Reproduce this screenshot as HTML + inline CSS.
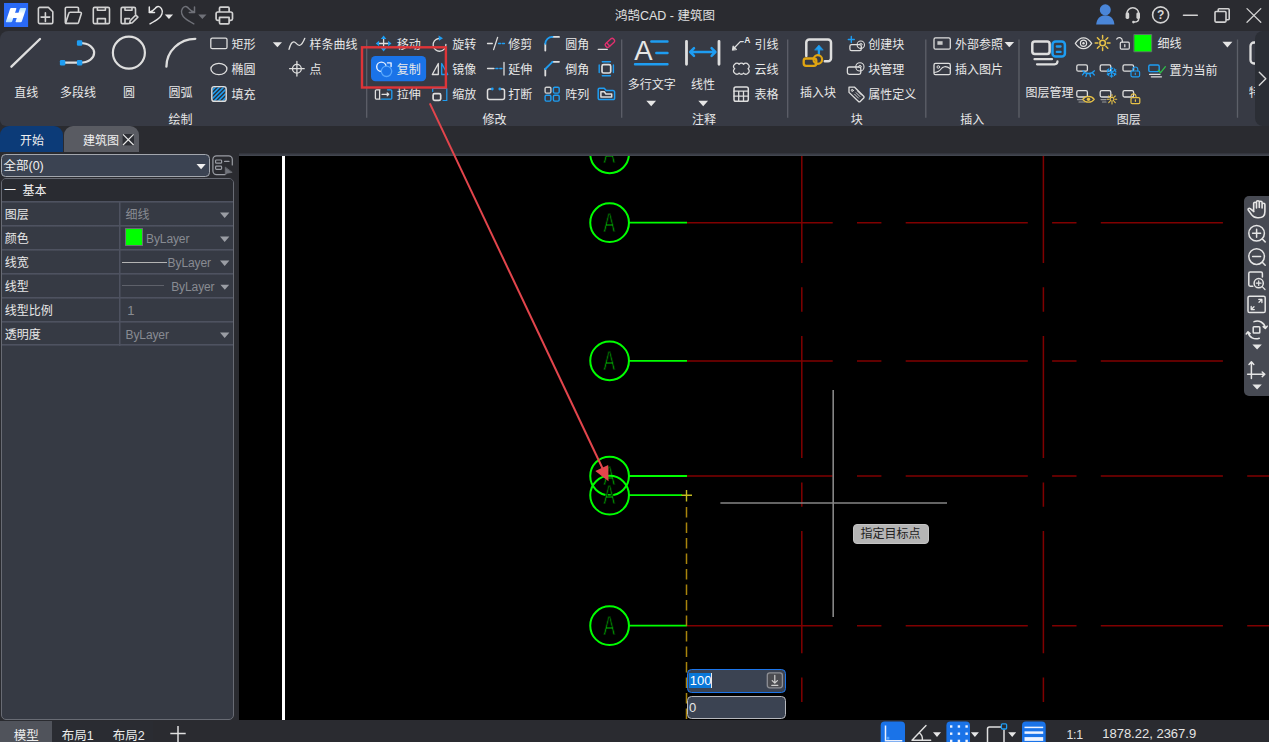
<!DOCTYPE html>
<html lang="zh-CN">
<head>
<meta charset="utf-8">
<title>鸿鹄CAD - 建筑图</title>
<style>
*{box-sizing:border-box;margin:0;padding:0}
html,body{width:1269px;height:742px;overflow:hidden;background:#2a2b30}
body{position:relative;font-family:"Liberation Sans","Noto Sans CJK SC",sans-serif;font-size:12px;color:#e6e6e6}
.abs{position:absolute}
.t{position:absolute;white-space:nowrap;line-height:16px;font-size:12px;color:#e8e8e8}
#titlebar{left:0;top:0;width:1269px;height:31px;background:#2a2b30}
#ribbon{left:0;top:30.500px;width:1262px;height:95.300px;background:#373a44;border-radius:8px 0 0 6px}
#ribbonR{left:1247px;top:37px;width:22px;height:83px;background:#2b2e35;border-radius:7px 0 0 7px}
#tabs{left:0;top:126px;width:1269px;height:26px}
#tab1{left:0;top:126px;width:63px;height:27px;background:#0c3b78;border-radius:9px 9px 0 0}
#tab2{left:64px;top:126px;width:75px;height:27px;background:#595b62;border-radius:9px 9px 0 0}
#strip{left:0;top:152.700px;width:1269px;height:3.400px;background:linear-gradient(#2f3138,#464a54)}
#left{left:0;top:152px;width:239px;height:568px;background:#2a2b30}
#canvas{left:239px;top:156px;width:1030px;height:564px;background:#000}
#status{left:0;top:720px;width:1269px;height:22px;background:#2a2b30}
</style>
</head>
<body>
<div id="titlebar" class="abs"></div>
<div id="ribbon" class="abs"></div>
<div id="strip" class="abs"></div>
<div id="tab1" class="abs"></div>
<div id="tab2" class="abs"></div>
<div id="canvas" class="abs"></div>
<div id="left" class="abs"></div>
<div id="status" class="abs"></div>
<!--TITLE--><div class="t" style="left:615px;top:7.600px;font-size:12.500px;color:#e0e0e0">鸿鹄CAD - 建筑图</div>
<svg class="abs" style="left:0;top:0" width="1269" height="31" viewBox="0 0 1269 31" fill="none" stroke="#d2d2d2" stroke-width="1.6" stroke-linecap="round" stroke-linejoin="round">
<defs><linearGradient id="lg" x1="0" y1="0" x2="0" y2="1"><stop offset="0" stop-color="#fff"/><stop offset="0.6" stop-color="#fff"/><stop offset="1" stop-color="#a8dcff"/></linearGradient><linearGradient id="lg2" x1="0" y1="0" x2="0" y2="1"><stop offset="0" stop-color="#b4e2ff"/><stop offset="0.45" stop-color="#fff"/><stop offset="1" stop-color="#e6f5ff"/></linearGradient></defs>
<rect x="4" y="3" width="24.100" height="24" fill="#2a6af6" stroke="none"/>
<path d="M11.200 8H15.800Q16.700 8 16.300 9L12.100 21.400Q11.800 22.200 10.900 22.200H6.500Q5.600 22.200 6 21.200L10.100 8.800Q10.400 8 11.200 8z" fill="url(#lg)" stroke="none"/>
<path d="M20.900 8H25.500Q26.400 8 26 9L21.800 21.400Q21.500 22.200 20.600 22.200H16.200Q15.300 22.200 15.700 21.200L19.800 8.800Q20.100 8 20.900 8z" fill="url(#lg2)" stroke="none"/>
<path d="M13.300 12.800H22.500L20.800 18H11.600z" fill="#fff" stroke="none"/>
<!-- new -->
<path d="M39.8 7.4h8.6l4.4 4.4v10.4a1.4 1.4 0 0 1-1.4 1.4H39.8a1.4 1.4 0 0 1-1.4-1.4V8.8a1.4 1.4 0 0 1 1.400-1.400zM45.400 12.800v8.600M41.100 17.100h8.600"/>
<!-- open -->
<path d="M65.300 22.500V8.500a1.200 1.200 0 0 1 1.200-1.200h10.800a1.200 1.200 0 0 1 1.200 1.200v3.700M65.600 23.300l3.200-10a1.500 1.500 0 0 1 1.400-1.100h10a1.100 1.100 0 0 1 1.100 1.500l-2.800 8.700a1.500 1.500 0 0 1-1.400 1h-11.500z"/>
<!-- save -->
<path d="M94.700 7.400h13.400a1.400 1.400 0 0 1 1.400 1.400v13.400a1.400 1.400 0 0 1-1.400 1.400H94.700a1.400 1.400 0 0 1-1.400-1.400V8.800a1.400 1.400 0 0 1 1.400-1.400zM97.400 7.600v2.600h8v-2.600M97.400 23.400v-4.800h8v4.800"/>
<!-- save as -->
<path d="M128.500 23.600h-6a1.400 1.400 0 0 1-1.400-1.400V8.800a1.400 1.400 0 0 1 1.400-1.400h11.600a1.400 1.400 0 0 1 1.400 1.400v5.400M125 7.600v2.600h7v-2.600M125 23.400v-4.800h4.500M129.500 23.400l0.700-2.800 5.600-5.600 2.100 2.100-5.600 5.600z"/>
<!-- undo -->
<path d="M149.200 12.300C152.500 11.800 154.600 9 156.200 7.400C158 5.800 160 6.600 161.400 8.600C163.600 12 161.500 16 158.500 18.500C156 20.600 153 22.200 150 23.800M149.300 7v5.500h5.200" stroke="#e6e6e6" stroke-width="1.500"/>
<path d="M164.800 14.400h8.300l-4.150 4.600z" fill="#e6e6e6" stroke="none"/>
<!-- redo -->
<path d="M194.600 12.300C191.300 11.800 189.200 9 187.600 7.400C185.800 5.800 183.800 6.600 182.400 8.600C180.200 12 182.300 16 185.300 18.500C187.800 20.600 190.800 22.200 193.800 23.800M194.500 7v5.500h-5.200" stroke="#6f7178" stroke-width="1.500"/>
<path d="M198.200 14.400h8.300l-4.150 4.600z" fill="#6f7178" stroke="none"/>
<!-- print -->
<path d="M219.500 12v-3.800a1 1 0 0 1 1-1h7.600a1 1 0 0 1 1 1v3.800M219.300 20.400h-1.600a1.600 1.600 0 0 1-1.600-1.600v-5a1.800 1.800 0 0 1 1.800-1.800h12.800a1.800 1.800 0 0 1 1.800 1.800v5a1.600 1.600 0 0 1-1.600 1.600h-1.600M219.500 17.400h9.600v5.400a1 1 0 0 1-1 1h-7.600a1 1 0 0 1-1-1z" stroke-width="1.700"/>
<!-- user -->
<circle cx="1105.300" cy="9.800" r="5.500" fill="#4a86d8" stroke="none"/>
<path d="M1096.200 24.600c0.300-5.600 3.800-9.400 9.100-9.400s8.800 3.800 9.100 9.400z" fill="#4a86d8" stroke="none"/>
<!-- headset -->
<path d="M1126.800 17v-3.200a6 6 0 0 1 12 0v3.200M1138.700 18.500c0 2.400-2 3.600-4.500 3.600" stroke-width="1.500"/>
<rect x="1125.600" y="12.600" width="3.600" height="6.400" rx="1.400" fill="#d2d2d2" stroke="none"/>
<rect x="1136.400" y="12.600" width="3.600" height="6.400" rx="1.400" fill="#d2d2d2" stroke="none"/>
<circle cx="1133.400" cy="22.100" r="1.300" fill="#d2d2d2" stroke="none"/>
<!-- help -->
<circle cx="1160.600" cy="14.900" r="8"/>
<text x="1160.600" y="19.300" font-family="Liberation Sans, sans-serif" font-size="12" font-weight="bold" text-anchor="middle" fill="#d8d8d8" stroke="none">?</text>
<!-- min -->
<path d="M1183.500 15.300h13.800M1218.200 11.200v-1.500a1 1 0 0 1 1-1h9a1 1 0 0 1 1 1v9a1 1 0 0 1-1 1h-1.500"/>
<rect x="1215" y="11.500" width="11" height="10.600" rx="1"/>
<path d="M1247 8.600l13.800 13.600M1260.800 8.600l-13.800 13.600" stroke-width="1.300"/>
</svg>
<!--/TITLE-->
<!--RIBBON--><svg class="abs" style="left:0;top:31px" width="1269" height="95" viewBox="0 31 1269 95" fill="none" stroke="#dedede" stroke-width="1.3" stroke-linecap="round" stroke-linejoin="round">
<defs><clipPath id="hc"><rect x="212.400" y="87.200" width="13.200" height="13.500" rx="1.800"/></clipPath></defs>
<!-- separators -->
<path d="M366.700 39.500V117.800M621.700 39.500V117.800M787.700 39.500V117.800M925.800 39.500V117.800M1019 39.500V117.800M1237.500 39.500V117.800" stroke="#5d6069" stroke-width="1.3" stroke-linecap="butt"/>
<!-- highlighted button -->
<rect x="371" y="56" width="55.100" height="25.300" rx="4.500" fill="#1a73e8" stroke="none"/>
<!-- draw group -->
<path d="M11.400 66.700L40 39" stroke-width="2.300"/>
<path d="M62.600 62.700H79.600C99 62.700 99 43 79.600 43" stroke-width="2.200"/>
<g fill="#1e9df2" stroke="none"><rect x="76.900" y="40.300" width="5.400" height="5.400" rx="1.200"/><rect x="59.900" y="60" width="5.400" height="5.400" rx="1.200"/><rect x="76.900" y="60" width="5.400" height="5.400" rx="1.200"/></g>
<circle cx="128.900" cy="52.700" r="16" stroke-width="2.200"/>
<path d="M166.400 66.700A28.900 27.900 0 0 1 195.300 38.800" stroke-width="2.300"/>
<rect x="210.800" y="38.100" width="16.200" height="10.600" rx="1.500"/>
<ellipse cx="218.900" cy="69" rx="8" ry="5.600"/>
<g clip-path="url(#hc)" stroke="#1e9df2" stroke-width="1.600" stroke-linecap="butt"><rect x="211" y="85" width="17" height="18" fill="#2a2d35" stroke="none"/><path d="M195.3 103L213.3 85M199.5 103L217.5 85M203.7 103L221.7 85M207.9 103L225.9 85M212.1 103L230.1 85M216.3 103L234.3 85M220.5 103L238.5 85M224.7 103L242.7 85M228.9 103L246.9 85"/></g>
<rect x="211.800" y="86.600" width="14.400" height="14.700" rx="2.400" stroke-width="1.400"/>
<path d="M272.800 42.200h9.200l-4.600 5z" fill="#e6e6e6" stroke="none"/>
<path d="M289 49.300C290.800 42.500 293.500 40.300 296 43.200C298.500 46.200 301.200 47.300 304.800 38.300"/>
<circle cx="296.900" cy="68.700" r="4.400"/><path d="M296.900 61.400V76M289.600 68.700H304.200"/>
<!-- move -->
<path d="M383.600 38.500V48.500M378.600 43.500H388.600"/>
<g fill="#1e9df2" stroke="none"><path d="M383.600 35.600l2.800 3.400h-5.600zM383.600 51.400l2.800-3.400h-5.600zM375.700 43.500l3.400-2.800v5.600zM391.500 43.500l-3.400-2.800v5.600z"/></g>
<!-- copy -->
<circle cx="381.400" cy="66.800" r="4.700" stroke="#e8f0ff" stroke-width="1.400"/><circle cx="386.500" cy="71.300" r="5.200" stroke="#58a6fb" fill="#1a73e8" stroke-width="1.300"/><path d="M387.500 62.900H391.100V66.500" stroke="#e8f0ff" stroke-width="1.400"/>
<!-- stretch -->
<path d="M380 89.800H376.600a1.200 1.200 0 0 0-1.200 1.200V98a1.200 1.200 0 0 0 1.200 1.200H380M379.600 89.800V99.200M382 94.300H388.600M387.200 92.900l1.500 1.400-1.500 1.400"/>
<path d="M387.500 89.800H390.600a1.200 1.200 0 0 1 1.200 1.200V98a1.200 1.200 0 0 1-1.200 1.200H381.500" stroke="#1e9df2"/>
<!-- rotate -->
<path d="M438.600 38.500A6.400 6.400 0 1 0 445.900 44.300"/><path d="M438.600 35.600l4.400 2.700-4 2.500z" fill="#1e9df2" stroke="none"/>
<!-- mirror -->
<path d="M438.300 63.500V74.500H432.300z"/><path d="M441.700 63.500V74.500H447.700z" stroke="#1e9df2"/>
<!-- scale -->
<rect x="433.100" y="93.700" width="7.600" height="6.600" rx="1.500" stroke-width="1.700"/><path d="M432.700 91.500V88.500H446.800V100.500H443" stroke="#1e9df2" stroke-width="1.200"/>
<!-- trim -->
<path d="M487.500 43.500H492.300M493.600 49.600L497.600 37.400"/><path d="M498.500 43.500H500.600M502.300 43.500H504.500" stroke="#1e9df2"/>
<!-- extend -->
<path d="M487.500 68.500H494M504 62.500V75"/><path d="M495.800 68.500H498M499.800 68.500H502" stroke="#1e9df2"/>
<!-- break -->
<path d="M491.500 89H489.500a2 2 0 0 0-2 2V97.500a2 2 0 0 0 2 2H502.500a2 2 0 0 0 2-2V91a2 2 0 0 0-2-2H500.500" stroke-width="1.500"/><circle cx="492.300" cy="89" r="1.400" fill="#1e9df2" stroke="none"/><circle cx="499.800" cy="89" r="1.400" fill="#1e9df2" stroke="none"/>
<!-- fillet -->
<path d="M545.300 50.500V43.800M552.500 36.900H559" stroke-width="1.800"/><path d="M545.300 43.800A6.900 6.900 0 0 1 552.500 36.900" stroke="#1e9df2" stroke-width="1.800"/>
<!-- chamfer -->
<path d="M545.300 75.500V69M552.500 61.800H559" stroke-width="1.800"/><path d="M545.300 69L552.500 61.800" stroke="#1e9df2" stroke-width="1.800"/>
<!-- array -->
<g stroke="#1e9df2" stroke-width="1.400"><rect x="545.100" y="87.300" width="5.800" height="5.800" rx="1.300" stroke="#cfcfcf"/><rect x="553.400" y="87.300" width="5.800" height="5.800" rx="1.300"/><rect x="545.100" y="95.300" width="5.800" height="5.800" rx="1.300"/><rect x="553.400" y="95.300" width="5.800" height="5.800" rx="1.300"/></g>
<!-- erase -->
<path d="M598.200 49.300H607.300"/><g transform="rotate(-42 610 42.800)" stroke="#e2306e" stroke-width="1.400"><rect x="604.600" y="40.500" width="10.600" height="4.600" rx="1.800"/><path d="M607.600 40.600V45"/></g>
<!-- offset -->
<rect x="602" y="64.600" width="8.700" height="8.400" rx="1.600" stroke-width="1.700"/><path d="M602.300 61.700H610.400M602.300 75.700H610.400M599.200 65V72.600M613.400 65V72.600" stroke="#1e9df2" stroke-width="1.400"/>
<!-- folder -->
<path d="M598.200 98.200V89.600a1.400 1.400 0 0 1 1.400-1.400H604.200l2 2.400H613a1.600 1.600 0 0 1 1.600 1.600V98.200a1.400 1.400 0 0 1-1.400 1.400H599.600a1.400 1.400 0 0 1-1.400-1.400z" stroke="#1e9df2" stroke-width="1.500"/><path d="M600.900 97V91.700H604.300l1.600 2.300H611.700V97z" stroke-width="1.500"/>
<!-- mtext -->
<text x="634.300" y="60.300" font-family="Liberation Sans, sans-serif" font-size="27.500" fill="#e6e6e6" stroke="none">A</text>
<path d="M651.300 41.500H667.500M656.300 53H667.500M635 64.200H667.500" stroke="#1e9df2" stroke-width="2.400"/>
<path d="M646.300 100.800h9.800l-4.900 5.400zM698.300 100.800h9.800l-4.900 5.400z" fill="#e6e6e6" stroke="none"/>
<!-- linear -->
<path d="M686.500 41.300V64.300M719 41.300V64.300" stroke-width="2.800"/><path d="M690.800 52H714.800M694 48.200L690.200 52l3.800 3.800M711.600 48.200l3.800 3.800-3.800 3.800" stroke="#1e9df2" stroke-width="2.500"/>
<!-- leader -->
<path d="M733 49.300L740.300 41.600H743.300"/><path d="M732.400 50l0.600-4.200 3.600 3.500z" fill="#dedede" stroke-width="0.800"/><text x="744.200" y="43.200" font-family="Liberation Sans, sans-serif" font-size="8.500" font-weight="bold" fill="#e6e6e6" stroke="none">A</text>
<!-- cloud -->
<path d="M734.700 64.300a2.700 2.700 0 0 1 4.430 0a2.700 2.700 0 0 1 4.430 0a2.700 2.700 0 0 1 4.430 0a2.600 2.600 0 0 1 0 4.400a2.600 2.600 0 0 1 0 4.400a2.700 2.700 0 0 1-4.430 0a2.700 2.700 0 0 1-4.430 0a2.700 2.700 0 0 1-4.430 0a2.600 2.600 0 0 1 0-4.400a2.600 2.600 0 0 1 0-4.400z"/>
<!-- table -->
<rect x="734" y="86.900" width="14.300" height="14.300" rx="1.800" stroke-width="1.500"/><path d="M734 91.200H748.300M734 96.200H748.300M738.700 91.200V101.200M743.500 91.200V101.200"/>
<!-- insert block -->
<path d="M806.300 56V42.400a3 3 0 0 1 3-3H828a3 3 0 0 1 3 3V58.200a3 3 0 0 1-3 3H824.800" stroke-width="2.500"/>
<path d="M818.900 54.800V49" stroke="#1e9df2" stroke-width="2.300" stroke-linecap="butt"/><path d="M814.800 49.800L818.900 45L823 49.800z" fill="#1e9df2" stroke="#1e9df2" stroke-width="0.600"/>
<rect x="803.700" y="58.500" width="12.600" height="7.300" rx="2.300" stroke="#e0a512" stroke-width="2.300"/><circle cx="817.800" cy="59.500" r="4.300" stroke="#e0a512" stroke-width="2.200"/>
<!-- create block -->
<path d="M851.300 36.500V42.500M848.300 39.500H854.300" stroke="#1e9df2" stroke-width="1.400"/><rect x="849.900" y="44.600" width="11.400" height="6" rx="1.600"/><circle cx="860.800" cy="44.700" r="3.700" stroke-width="1.100"/><path d="M859.400 44.700a1.400 1.400 0 0 1 2.800 0" stroke-width="1"/>
<!-- block mgmt -->
<rect x="847.400" y="67" width="13.400" height="7.400" rx="1.800"/><circle cx="859.900" cy="66.900" r="4.100" stroke-width="1.100"/><path d="M858.400 66.900a1.500 1.500 0 0 1 3 0" stroke-width="1"/>
<!-- attdef -->
<path d="M849 87.200H854.600L863.700 96.300a1.200 1.200 0 0 1 0 1.700L860.200 101.500a1.200 1.200 0 0 1-1.700 0L849 92.400z"/><circle cx="852.300" cy="90.400" r="1" stroke-width="1"/><path d="M854.600 94.200l3.900 3.900M856.100 92.700l3.900 3.900M857.600 91.200l3.900 3.900" stroke-width="0.900"/>
<!-- xref -->
<rect x="934" y="37.900" width="16.300" height="11.300" rx="1.500"/><rect x="937.400" y="41.200" width="5.200" height="3.600" fill="#c8c8c8" stroke="none"/>
<path d="M1004.500 41.900h9.600l-4.800 5.400z" fill="#e6e6e6" stroke="none"/>
<!-- image -->
<rect x="934" y="63.400" width="16.300" height="11.300" rx="1.500"/><circle cx="938.300" cy="67" r="1.300" stroke-width="1"/><path d="M934.500 72.500C937.500 72 939.500 71.500 941 69C942.500 66.500 946 65.500 950 68.500" stroke-width="1.100"/>
<!-- layer mgr -->
<rect x="1032.300" y="41.500" width="17.300" height="12.500" rx="2.400" stroke-width="2.500"/><path d="M1034.500 59.200H1052M1037 64.300H1054.500a3 3 0 0 0 3-3" stroke-width="2.200"/>
<rect x="1052.500" y="41.500" width="12.400" height="15.100" rx="3.200" stroke="#1e9df2" stroke-width="2.500" fill="#373a44"/><path d="M1056.800 46.500H1060.600M1056.800 51.900H1060.600" stroke="#1e9df2" stroke-width="2.300"/>
<!-- eye -->
<path d="M1075.300 43.300C1078 39.300 1080.700 37.900 1083.500 37.900S1089 39.300 1091.700 43.300C1089 47.300 1086.300 48.700 1083.500 48.700S1078 47.300 1075.300 43.300z" stroke-width="1.200"/><circle cx="1083.500" cy="43.300" r="3.100" stroke-width="1.200"/><circle cx="1083.500" cy="43.300" r="1.200" fill="#dedede" stroke="none"/>
<!-- sun -->
<g stroke="#e8c247" stroke-width="1.500"><circle cx="1102.600" cy="43" r="2.800"/><path d="M1107.3 43.0L1110.0 43.0M1105.9 46.3L1107.8 48.2M1102.6 47.7L1102.6 50.4M1099.3 46.3L1097.4 48.2M1097.9 43.0L1095.2 43.0M1099.3 39.7L1097.4 37.8M1102.6 38.3L1102.6 35.6M1105.9 39.7L1107.8 37.8"/></g>
<!-- unlock -->
<rect x="1120.300" y="42.200" width="9" height="7" rx="1.200" stroke-width="1.200"/><path d="M1122.300 42V40.500a3 3 0 0 0-5.600-1.400" stroke-width="1.200"/><path d="M1124.800 44.700V46.700" stroke-width="1.300"/>
<!-- colour swatch -->
<rect x="1134.200" y="34.500" width="17.500" height="17.300" fill="#00ff00" stroke="#6a6d75" stroke-width="0.800"/>
<path d="M1222.400 41.800h10l-5 5.700z" fill="#e6e6e6" stroke="none"/>
<!-- row 2 layer icons -->
<g stroke-width="1.200">
<rect x="1076.800" y="64.900" width="10.600" height="6.300" rx="1.500" stroke-width="1.300"/><path d="M1082.800 70.800C1085.500 74.400 1091.500 74.400 1094.300 70.800M1084.300 72.600l-1.800 2.300M1086.800 73.600l-0.900 2.900M1089.800 73.700l0.700 2.900M1092.400 72.800l1.900 2.200" stroke="#1e9df2" stroke-width="1.300"/>
<rect x="1100.200" y="64.900" width="10.600" height="6.300" rx="1.500" stroke-width="1.300"/><path d="M1111.6 72.2L1111.6 77.2M1111.6 75.4L1113.0 76.3M1111.6 75.4L1110.2 76.3M1111.6 72.2L1107.3 74.7M1108.8 73.8L1108.7 75.5M1108.8 73.8L1107.3 73.0M1111.6 72.2L1107.3 69.7M1108.8 70.6L1107.3 71.4M1108.8 70.6L1108.7 68.9M1111.6 72.2L1111.6 67.2M1111.6 69.0L1110.2 68.1M1111.6 69.0L1113.0 68.1M1111.6 72.2L1115.9 69.7M1114.4 70.6L1114.5 68.9M1114.4 70.6L1115.9 71.4M1111.6 72.2L1115.9 74.7M1114.4 73.8L1115.9 73.0M1114.4 73.8L1114.5 75.5" stroke="#1e9df2" stroke-width="1.100"/>
<rect x="1123" y="64.900" width="10.600" height="6.300" rx="1.500" stroke-width="1.300"/><rect x="1131" y="71" width="8.600" height="5.800" rx="1.200" stroke="#1e9df2" fill="#373a44"/><path d="M1132.800 70.800V69.500a2.500 2.500 0 0 1 5 0V70.800M1135.300 73.200V74.600" stroke="#1e9df2"/>
<rect x="1148.800" y="65" width="10.400" height="6.600" rx="1.300" stroke="#1e9df2" stroke-width="1.400"/><path d="M1149.500 74.300H1160M1151.300 76.800H1161.500" stroke-width="1.200"/><path d="M1158.300 70.300l2.300 2.400 4.800-6" stroke="#2fbf4a" stroke-width="1.300"/>
<!-- row 3 -->
<rect x="1076.800" y="90.700" width="10.600" height="6.300" rx="1.500" stroke-width="1.300"/><path d="M1077.500 99.600H1084M1079 102H1085" stroke="#9a9a9a"/><path d="M1082.800 99.300C1085.400 95.500 1091.600 95.500 1094.200 99.300C1091.600 103.100 1085.400 103.100 1082.800 99.300z" fill="#373a44" stroke="#e8c247" stroke-width="1.300"/><circle cx="1088.500" cy="99.300" r="1.700" fill="#e8c247" stroke="none"/>
<rect x="1100.200" y="90.700" width="10.600" height="6.300" rx="1.500" stroke-width="1.300"/><path d="M1101 99.600H1106M1102.500 102H1106" stroke="#9a9a9a"/><g stroke="#e8c247" stroke-width="1.100"><circle cx="1112" cy="99.300" r="1.900"/><path d="M1112 94.600V96.300M1112 102.300V104M1107.300 99.300H1109M1115 99.300H1116.700M1108.700 96l1.200 1.200M1114.100 101.400l1.200 1.200M1108.700 102.600l1.200-1.200M1114.100 97.200l1.200-1.200"/></g>
<rect x="1123" y="90.700" width="10.600" height="6.300" rx="1.500" stroke-width="1.300"/><rect x="1131" y="97.600" width="8.800" height="6" rx="1.200" stroke="#e8c247" fill="#373a44"/><path d="M1136 97.400V96.300a2.500 2.500 0 0 0-4.800-0.900M1135.400 99.800V101.300" stroke="#e8c247"/>
</g>
<!-- next group clipped -->
<path d="M1256 42.500H1254a3.500 3.500 0 0 0-3.500 3.500V60a3.500 3.500 0 0 0 3.500 3.500H1256" stroke-width="2.300"/>
<!-- right scroller -->
<path d="M1255 31H1269V125.500H1255a0 0 0 0 1 0 0V31z" fill="none" stroke="none"/>
</svg>

<div class="t" style="left:14.2px;top:84.5px">直线</div>
<div class="t" style="left:59.9px;top:84.5px">多段线</div>
<div class="t" style="left:123.0px;top:84.5px">圆</div>
<div class="t" style="left:168.6px;top:84.5px">圆弧</div>
<div class="t" style="left:168.6px;top:111.7px">绘制</div>
<div class="t" style="left:231.5px;top:36.5px">矩形</div>
<div class="t" style="left:231.5px;top:61.8px">椭圆</div>
<div class="t" style="left:231.5px;top:86.8px">填充</div>
<div class="t" style="left:309.5px;top:36.5px">样条曲线</div>
<div class="t" style="left:309.5px;top:61.8px">点</div>
<div class="t" style="left:396.7px;top:36.5px">移动</div>
<div class="t" style="left:396.7px;top:61.8px">复制</div>
<div class="t" style="left:396.7px;top:86.8px">拉伸</div>
<div class="t" style="left:452.3px;top:36.5px">旋转</div>
<div class="t" style="left:452.3px;top:61.8px">镜像</div>
<div class="t" style="left:452.3px;top:86.8px">缩放</div>
<div class="t" style="left:508.3px;top:36.5px">修剪</div>
<div class="t" style="left:508.3px;top:61.8px">延伸</div>
<div class="t" style="left:508.3px;top:86.8px">打断</div>
<div class="t" style="left:565.2px;top:36.5px">圆角</div>
<div class="t" style="left:565.2px;top:61.8px">倒角</div>
<div class="t" style="left:565.2px;top:86.8px">阵列</div>
<div class="t" style="left:482.4px;top:111.7px">修改</div>
<div class="t" style="left:627.8px;top:77.1px">多行文字</div>
<div class="t" style="left:691.1px;top:77.1px">线性</div>
<div class="t" style="left:692.1px;top:111.7px">注释</div>
<div class="t" style="left:754.5px;top:36.5px">引线</div>
<div class="t" style="left:754.5px;top:61.8px">云线</div>
<div class="t" style="left:754.5px;top:86.8px">表格</div>
<div class="t" style="left:800.0px;top:85.2px">插入块</div>
<div class="t" style="left:868.3px;top:36.5px">创建块</div>
<div class="t" style="left:868.3px;top:61.8px">块管理</div>
<div class="t" style="left:868.3px;top:86.8px">属性定义</div>
<div class="t" style="left:850.8px;top:111.7px">块</div>
<div class="t" style="left:954.9px;top:36.5px">外部参照</div>
<div class="t" style="left:954.9px;top:61.8px">插入图片</div>
<div class="t" style="left:960.3px;top:111.7px">插入</div>
<div class="t" style="left:1025.4px;top:84.9px">图层管理</div>
<div class="t" style="left:1157.5px;top:36.2px">细线</div>
<div class="t" style="left:1169.6px;top:62.8px">置为当前</div>
<div class="t" style="left:1116.7px;top:111.9px">图层</div>
<div class="abs" style="left:1248.8px;top:85.2px;width:6.2px;height:16px;overflow:hidden"><div class="t" style="left:0;top:0">特性</div></div>
<div class="abs" style="left:1254.500px;top:30.500px;width:15px;height:95.300px;background:#2b2e35;border-radius:8px 0 0 8px"></div>
<svg class="abs" style="left:1254px;top:66px" width="15" height="26" viewBox="1254 66 15 26" fill="none" stroke="#d8d8d8" stroke-width="1.400" stroke-linecap="round" stroke-linejoin="round"><path d="M1259.300 72.300L1265.800 78.800L1259.300 85.300"/></svg><!--/RIBBON-->
<!--LEFTPANEL--><div class="t" style="left:19px;top:132.500px;width:26px;text-align:center;color:#f0f0f0">开始</div>
<div class="t" style="left:83px;top:132.500px;color:#f0f0f0">建筑图</div>
<svg class="abs" style="left:121px;top:132px" width="16" height="16" viewBox="121 132 16 16" stroke="#e8e8e8" stroke-width="1.200" fill="none"><rect x="122.600" y="134" width="11.400" height="11.400" fill="#2c2e34" stroke="none"/><path d="M123 134.400L133.600 145M133.600 134.400L123 145"/></svg>
<div class="abs" style="left:0.500px;top:153.500px;width:209.500px;height:23.500px;background:#3b4352;border:1.300px solid #a3a7ae;border-radius:4.500px"></div>
<div class="t" style="left:3.500px;top:158.300px;font-size:12.500px;color:#f0f0f0">全部(0)</div>
<svg class="abs" style="left:196px;top:163px" width="11" height="7" viewBox="0 0 11 7"><path d="M0.500 0.900H9.700L5.100 6.300z" fill="#f0f0f0"/></svg>
<svg class="abs" style="left:211px;top:154px" width="24" height="23" viewBox="211 154 24 23" fill="none" stroke="#9a9da4" stroke-width="1.200" stroke-linecap="round" stroke-linejoin="round"><path d="M232.300 165V159.500a3.600 3.600 0 0 0-3.600-3.600H216.500a3.600 3.600 0 0 0-3.600 3.600V171a3.600 3.600 0 0 0 3.600 3.600H225"/><rect x="215.600" y="160" width="6" height="3.200" rx="0.800"/><rect x="215.600" y="166.200" width="6" height="3.200" rx="0.800"/><path d="M224.600 161.400H229"/><path d="M225.300 167.500V174.800L227.300 173.200L231.800 172.400z" fill="#72757c" stroke="#72757c" stroke-width="0.700"/></svg>
<div class="abs" style="left:1px;top:177.500px;width:233px;height:542.700px;background:#363a44;border:1.300px solid #686b74;border-radius:5px 5px 5px 5px"></div>
<div class="abs" style="left:2.300px;top:178.800px;width:230.400px;height:22.700px;background:#292b31;border-radius:4px 4px 0 0"></div>
<div class="abs" style="left:2.300px;top:200.800px;width:230.400px;height:145.200px;background:
linear-gradient(#4e5260,#4e5260) 0 0/100% 1.600px no-repeat,
linear-gradient(#4e5260,#4e5260) 0 24px/100% 1.600px no-repeat,
linear-gradient(#4e5260,#4e5260) 0 48px/100% 1.600px no-repeat,
linear-gradient(#4e5260,#4e5260) 0 72px/100% 1.600px no-repeat,
linear-gradient(#4e5260,#4e5260) 0 96px/100% 1.600px no-repeat,
linear-gradient(#4e5260,#4e5260) 0 120px/100% 1.600px no-repeat,
linear-gradient(#4e5260,#4e5260) 0 143.500px/100% 1.600px no-repeat,
linear-gradient(#4e5260,#4e5260) 117px 0/1.500px 100% no-repeat"></div>
<div class="t" style="left:4px;top:183px;color:#f0f0f0">一<span style="margin-left:6.500px">基本</span></div>
<div class="t" style="left:4.800px;top:207.200px">图层</div>
<div class="t" style="left:4.800px;top:231.200px">颜色</div>
<div class="t" style="left:4.800px;top:255.200px">线宽</div>
<div class="t" style="left:4.800px;top:279.200px">线型</div>
<div class="t" style="left:4.800px;top:303.200px">线型比例</div>
<div class="t" style="left:4.800px;top:327.200px">透明度</div>
<div class="t" style="left:125.500px;top:207.200px;color:#888b92">细线</div>
<div class="abs" style="left:124.500px;top:228.200px;width:18px;height:17.800px;background:#00ff00;border:0.800px solid #6a6d75"></div>
<div class="t" style="left:146px;top:231px;color:#888b92;font-size:12px;letter-spacing:-0.100px">ByLayer</div>
<div class="abs" style="left:122px;top:261.500px;width:45px;height:1.200px;background:#b4b4b4"></div>
<div class="t" style="left:167.600px;top:255px;color:#888b92;font-size:12px;letter-spacing:-0.100px">ByLayer</div>
<div class="abs" style="left:122px;top:284.700px;width:41.700px;height:1px;background:#5e616a"></div>
<div class="t" style="left:171.200px;top:279px;color:#888b92;font-size:12px;letter-spacing:-0.100px">ByLayer</div>
<div class="t" style="left:127.200px;top:302.700px;color:#888b92;font-size:13px">1</div>
<div class="t" style="left:125.500px;top:327px;color:#888b92;font-size:12px;letter-spacing:-0.100px">ByLayer</div>
<svg class="abs" style="left:219px;top:205px" width="12" height="140" viewBox="219 205 12 140" fill="#9a9da4"><path d="M220 212.600h9.400l-4.700 5.300zM220 236.600h9.400l-4.700 5.300zM220 260.600h9.400l-4.700 5.300zM220.400 284.800h8.800l-4.400 5zM220 332.600h9.400l-4.700 5.300z"/></svg>
<!--/LEFTPANEL-->
<!--CANVAS--><svg class="abs" style="left:239px;top:156px" width="1030" height="564" viewBox="239 156 1030 564">
<rect x="282" y="156" width="3" height="564" fill="#fff"/>
<path d="M687.0 222.8H832.7M857.0 222.8H881.4M905.7 222.8H1027.8M1052.1 222.8H1076.5M1100.8 222.8H1222.9M1247.2 222.8H1269.0M687.0 360.9H832.7M857.0 360.9H881.4M905.7 360.9H1027.8M1052.1 360.9H1076.5M1100.8 360.9H1222.9M1247.2 360.9H1269.0M687.0 476.1H832.7M857.0 476.1H881.4M905.7 476.1H1027.8M1052.1 476.1H1076.5M1100.8 476.1H1222.9M1247.2 476.1H1269.0M687.0 625.8H832.7M857.0 625.8H881.4M905.7 625.8H1027.8M1052.1 625.8H1076.5M1100.8 625.8H1222.9M1247.2 625.8H1269.0" stroke="#800000" stroke-width="1.5" fill="none"/>
<path d="M801.8 156.0V263.0M801.8 287.3V311.7M801.8 336.0V458.1M801.8 482.4V506.8M801.8 531.1V653.2M801.8 677.5V701.9M1043.4 156.0V263.0M1043.4 287.3V311.7M1043.4 336.0V458.1M1043.4 482.4V506.8M1043.4 531.1V653.2M1043.4 677.5V701.9" stroke="#800000" stroke-width="1.5" fill="none"/>
<circle cx="609.6" cy="153.8" r="19.35" fill="none" stroke="#00ff00" stroke-width="2"/>
<text x="609.3" y="162.8" font-family="Liberation Sans, sans-serif" font-size="27.5" text-anchor="middle" fill="#00d000" stroke="#000" stroke-width="1.1" transform="translate(609.2 0) scale(0.63 1) translate(-609.2 0)">A</text>
<circle cx="609.6" cy="222.7" r="19.35" fill="none" stroke="#00ff00" stroke-width="2"/>
<text x="609.3" y="231.7" font-family="Liberation Sans, sans-serif" font-size="27.5" text-anchor="middle" fill="#00d000" stroke="#000" stroke-width="1.1" transform="translate(609.2 0) scale(0.63 1) translate(-609.2 0)">A</text>
<path d="M629 222.7H687.0" stroke="#00ff00" stroke-width="1.8"/>
<circle cx="609.6" cy="360.8" r="19.35" fill="none" stroke="#00ff00" stroke-width="2"/>
<text x="609.3" y="369.8" font-family="Liberation Sans, sans-serif" font-size="27.5" text-anchor="middle" fill="#00d000" stroke="#000" stroke-width="1.1" transform="translate(609.2 0) scale(0.63 1) translate(-609.2 0)">A</text>
<path d="M629 360.8H687.0" stroke="#00ff00" stroke-width="1.8"/>
<circle cx="609.6" cy="476.0" r="19.35" fill="none" stroke="#00ff00" stroke-width="2"/>
<text x="609.3" y="485.0" font-family="Liberation Sans, sans-serif" font-size="27.5" text-anchor="middle" fill="#00d000" stroke="#000" stroke-width="1.1" transform="translate(609.2 0) scale(0.63 1) translate(-609.2 0)">A</text>
<path d="M629 476.0H687.0" stroke="#00ff00" stroke-width="1.8"/>
<circle cx="609.6" cy="495.2" r="19.35" fill="none" stroke="#00ff00" stroke-width="2"/>
<text x="609.3" y="504.2" font-family="Liberation Sans, sans-serif" font-size="27.5" text-anchor="middle" fill="#00d000" stroke="#000" stroke-width="1.1" transform="translate(609.2 0) scale(0.63 1) translate(-609.2 0)">A</text>
<path d="M629 495.2H682.0" stroke="#00ff00" stroke-width="1.8"/>
<circle cx="609.6" cy="625.7" r="19.35" fill="none" stroke="#00ff00" stroke-width="2"/>
<text x="609.3" y="634.7" font-family="Liberation Sans, sans-serif" font-size="27.5" text-anchor="middle" fill="#00d000" stroke="#000" stroke-width="1.1" transform="translate(609.2 0) scale(0.63 1) translate(-609.2 0)">A</text>
<path d="M629 625.7H687.0" stroke="#00ff00" stroke-width="1.8"/>
<path d="M681.5 495.2H692M686.5 490V501.5" stroke="#c4bc20" stroke-width="1.4"/>
<path d="M686.5 507V720" stroke="#a8840c" stroke-width="1.5" stroke-dasharray="10.4 5.1"/>
<path d="M833.2 390V617M720.4 503H947" stroke="#858585" stroke-width="1.6"/>
</svg><!--/CANVAS-->
<!--STATUS--><div class="abs" style="left:0;top:721.300px;width:51.700px;height:21px;background:#50535b"></div>
<div class="abs" style="left:51.700px;top:721.300px;width:101.300px;height:21px;background:#2a2c32"></div>
<div class="t" style="left:13.800px;top:727.500px;font-size:12.500px;color:#ececec">模型</div>
<div class="t" style="left:61.700px;top:727.500px;font-size:12.500px;color:#ececec">布局1</div>
<div class="t" style="left:112.800px;top:727.500px;font-size:12.500px;color:#ececec">布局2</div>
<div class="t" style="left:1066.500px;top:726.500px;font-size:12.300px;color:#e4e4e4;letter-spacing:-0.300px">1:1</div>
<div class="t" style="left:1102.200px;top:726.300px;font-size:13px;color:#e4e4e4">1878.22, 2367.9</div>
<svg class="abs" style="left:160px;top:720px" width="1109" height="22" viewBox="160 720 1109 22" fill="none" stroke="#e0e0e0" stroke-width="1.400">
<path d="M170.300 733.600H185.700M178 725.900V742" stroke-width="1.500"/>
<rect x="880.700" y="721.500" width="24.300" height="26" rx="4" fill="#1a73e8" stroke="none"/>
<path d="M885.500 725.400V740.700H902.300" stroke="#e8eefc" stroke-width="1.500"/><rect x="886.500" y="736.800" width="2.800" height="2.800" fill="#59a5ff" stroke="none"/>
<path d="M926 725.500L912 740.300H930.700M922.300 740.300A8 8 0 0 0 919.300 732.800" stroke-width="1.400" stroke-linejoin="round" stroke-linecap="round"/>
<path d="M933 732.200h8l-4 4.700zM970.900 732.200h8l-4 4.700zM1008.200 732.200h8l-4 4.700z" fill="#e6e6e6" stroke="none"/>
<rect x="946.400" y="721.500" width="23.600" height="26" rx="4" fill="#1a73e8" stroke="none"/>
<g fill="#eef3ff" stroke="none"><rect x="950" y="725.300" width="2.400" height="2.400"/><rect x="957.700" y="725.300" width="2.400" height="2.400"/><rect x="965.400" y="725.300" width="2.400" height="2.400"/><rect x="950" y="732.500" width="2.400" height="2.400"/><rect x="957.700" y="732.500" width="2.400" height="2.400"/><rect x="965.400" y="732.500" width="2.400" height="2.400"/><rect x="950" y="739.700" width="2.400" height="2.400"/><rect x="957.700" y="739.700" width="2.400" height="2.400"/><rect x="965.400" y="739.700" width="2.400" height="2.400"/></g>
<path d="M987.500 742V729a2 2 0 0 1 2-2H1001M1004 729.500V742" stroke-width="1.500"/><rect x="1001.400" y="723.800" width="5.200" height="5.200" rx="1" stroke="#1e9df2" stroke-width="1.300"/>
<rect x="1022" y="721.500" width="23.700" height="26" rx="4" fill="#1a73e8" stroke="none"/>
<path d="M1024.500 727.400H1043.200" stroke="#eef3ff" stroke-width="1.500"/><path d="M1024.500 732.600H1043.200" stroke="#eef3ff" stroke-width="2.500"/><path d="M1024.500 739H1043.200" stroke="#eef3ff" stroke-width="3.800"/>
</svg>
<!--/STATUS-->
<!--OVERLAY--><div class="abs" style="left:1243.500px;top:196px;width:26px;height:200px;background:#474a53;border-radius:5px 0 0 5px"></div>
<svg class="abs" style="left:1243px;top:196px" width="26" height="200" viewBox="1243 196 26 200" fill="none" stroke="#e6e6e6" stroke-width="1.500" stroke-linecap="round" stroke-linejoin="round">
<!-- hand -->
<g transform="translate(1247.300 0) scale(1.080 1) translate(-1246.500 0)"><path d="M1252.400 210.500V203.600a1.300 1.300 0 0 1 2.600 0V208M1255 207.500V202a1.300 1.300 0 0 1 2.600 0V207.500M1257.600 207.500V202.600a1.300 1.300 0 0 1 2.600 0V208M1260.200 208V204.500a1.300 1.300 0 0 1 2.600 0V211.500c0 4-2.400 6.300-5.800 6.300h-1.200c-2.600 0-4-1.200-5.400-3.200l-3-4.600c-0.700-1.200 0.700-2.300 1.800-1.400l3.400 3"/></g>
<!-- zoom in -->
<circle cx="1256.600" cy="233.300" r="7.800"/><path d="M1262.300 239l2.900 2.900M1252.600 233.300h8M1256.600 229.300v8"/>
<!-- zoom out -->
<circle cx="1256.600" cy="256.600" r="7.800"/><path d="M1262.300 262.300l2.900 2.900M1252.600 256.600h8"/>
<!-- zoom window -->
<path d="M1252.800 286.200H1250.200a1.400 1.400 0 0 1-1.400-1.400V273.400a1.400 1.400 0 0 1 1.400-1.400H1261a1.400 1.400 0 0 1 1.400 1.400V277"/><circle cx="1258.700" cy="283.200" r="4.600"/><path d="M1262.200 286.700l2.800 2.800M1256.400 283.200h4.600M1258.700 280.900v4.600" stroke-width="1.200"/>
<!-- extents -->
<rect x="1248" y="296.200" width="17.200" height="16.400" rx="1.600"/><path d="M1259 302.300l2.800-2.800M1258.800 299.400h3.100v3.100M1254 306.700l-2.800 2.800M1254.300 309.600h-3.100v-3.100" stroke-width="1.300"/>
<!-- orbit -->
<rect x="1253.200" y="326.800" width="6.600" height="6.200" rx="0.800"/><path d="M1254 321.600C1259 319.600 1264.300 322.600 1265.300 327.800M1263.200 326.600l2.100 1.900 1.900-2.300M1259.300 338.200C1254.300 340.200 1249 337.200 1248 332M1246.200 334l1.800-2.200 2.200 1.800"/>
<path d="M1252.400 344.400h9.400l-4.700 5zM1252.400 384.400h9.400l-4.700 5z" fill="#e6e6e6" stroke="none"/>
<!-- axes -->
<path d="M1251.400 362V374.300H1264.600M1249 364.400l2.400-2.600 2.400 2.600M1262.200 372l2.600 2.300-2.600 2.300M1251.400 374.300V378.500M1247.600 374.300H1251.400"/>
</svg>
<!-- tooltip -->
<div class="abs" style="left:853px;top:523.600px;width:76.200px;height:20.300px;background:#b5b5b5;border-radius:4px;border:1.200px solid #c4c4c4"></div>
<div class="t" style="left:860.600px;top:526.400px;color:#222;font-size:12px">指定目标点</div>
<!-- inputs -->
<div class="abs" style="left:686.500px;top:668.500px;width:99.500px;height:24.100px;background:#3b4352;border:1.600px solid #1d76ea;border-radius:4.500px"></div>
<div class="abs" style="left:689.200px;top:672.800px;width:21.800px;height:15.600px;background:#0a78d8"></div>
<div class="t" style="left:689.700px;top:672.600px;color:#fff;font-size:13px">100</div>
<div class="abs" style="left:711px;top:672.800px;width:1.200px;height:15.600px;background:#e8e8e8"></div>
<svg class="abs" style="left:766px;top:671px" width="18" height="19" viewBox="766 671 18 19" fill="none" stroke="#d0d0d0" stroke-width="1.200" stroke-linecap="round" stroke-linejoin="round"><rect x="767.300" y="672.800" width="15.100" height="15" rx="2.500" fill="#4b4c51" stroke="#8d8f95" stroke-width="1.300"/><path d="M774.800 675.300V683M772.200 680.600l2.600 2.600 2.600-2.600M771.800 685.400H777.800"/></svg>
<div class="abs" style="left:686.500px;top:695.900px;width:99.500px;height:23.600px;background:#3b4352;border:1.500px solid #b6b8bd;border-radius:4.500px"></div>
<div class="t" style="left:689px;top:700px;color:#e8e8e8;font-size:13px">0</div>
<!-- annotations -->
<svg class="abs" style="left:350px;top:40px" width="280" height="450" viewBox="350 40 280 450" fill="none">
<rect x="362" y="47.300" width="83.900" height="40.200" stroke="#de3438" stroke-width="2.400"/>
<path d="M429.800 103.400L603.200 469.800" stroke="#e2454c" stroke-width="2"/>
<path d="M608.500 481.300L595.300 471.100L608.200 465z" fill="#e2454c"/>
</svg>
<!--/OVERLAY-->
</body>
</html>
